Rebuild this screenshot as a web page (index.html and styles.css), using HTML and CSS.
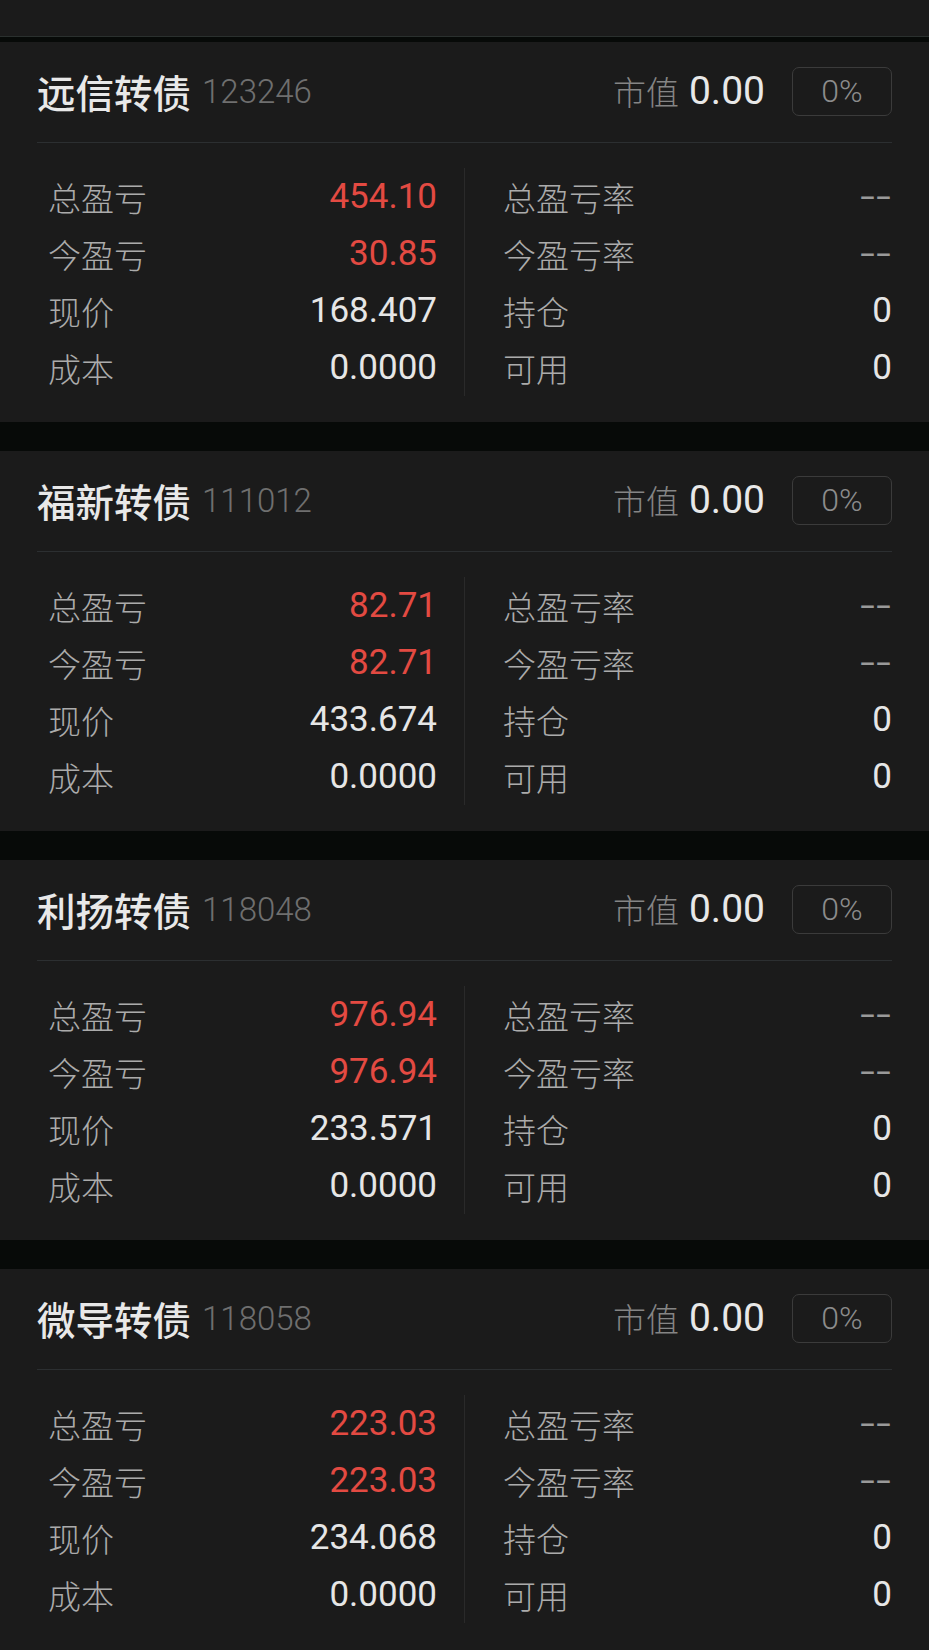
FILE: index.html
```html
<!DOCTYPE html>
<html lang="zh-CN">
<head>
    <meta charset="UTF-8">
    <title>持仓</title>
    <link rel="stylesheet" href="styles.css">
</head>
<body>
<div class="topbar"></div>

<div class="list">
    <div class="card">
        <div class="head">
            <span class="name">远信转债</span>
            <span class="code">123246</span>
            <span class="mv-label">市值</span>
            <span class="mv">0.00</span>
            <span class="ratio">0%</span>
        </div>
        <div class="data">
            <ul class="col col-left">
                <li><span class="k">总盈亏</span><span class="v red">454.10</span></li>
                <li><span class="k">今盈亏</span><span class="v red">30.85</span></li>
                <li><span class="k">现价</span><span class="v">168.407</span></li>
                <li><span class="k">成本</span><span class="v">0.0000</span></li>
            </ul>
            <ul class="col col-right">
                <li><span class="k">总盈亏率</span><span class="v dash">--</span></li>
                <li><span class="k">今盈亏率</span><span class="v dash">--</span></li>
                <li><span class="k">持仓</span><span class="v">0</span></li>
                <li><span class="k">可用</span><span class="v">0</span></li>
            </ul>
        </div>
    </div>

    <div class="card">
        <div class="head">
            <span class="name">福新转债</span>
            <span class="code">111012</span>
            <span class="mv-label">市值</span>
            <span class="mv">0.00</span>
            <span class="ratio">0%</span>
        </div>
        <div class="data">
            <ul class="col col-left">
                <li><span class="k">总盈亏</span><span class="v red">82.71</span></li>
                <li><span class="k">今盈亏</span><span class="v red">82.71</span></li>
                <li><span class="k">现价</span><span class="v">433.674</span></li>
                <li><span class="k">成本</span><span class="v">0.0000</span></li>
            </ul>
            <ul class="col col-right">
                <li><span class="k">总盈亏率</span><span class="v dash">--</span></li>
                <li><span class="k">今盈亏率</span><span class="v dash">--</span></li>
                <li><span class="k">持仓</span><span class="v">0</span></li>
                <li><span class="k">可用</span><span class="v">0</span></li>
            </ul>
        </div>
    </div>

    <div class="card">
        <div class="head">
            <span class="name">利扬转债</span>
            <span class="code">118048</span>
            <span class="mv-label">市值</span>
            <span class="mv">0.00</span>
            <span class="ratio">0%</span>
        </div>
        <div class="data">
            <ul class="col col-left">
                <li><span class="k">总盈亏</span><span class="v red">976.94</span></li>
                <li><span class="k">今盈亏</span><span class="v red">976.94</span></li>
                <li><span class="k">现价</span><span class="v">233.571</span></li>
                <li><span class="k">成本</span><span class="v">0.0000</span></li>
            </ul>
            <ul class="col col-right">
                <li><span class="k">总盈亏率</span><span class="v dash">--</span></li>
                <li><span class="k">今盈亏率</span><span class="v dash">--</span></li>
                <li><span class="k">持仓</span><span class="v">0</span></li>
                <li><span class="k">可用</span><span class="v">0</span></li>
            </ul>
        </div>
    </div>

    <div class="card">
        <div class="head">
            <span class="name">微导转债</span>
            <span class="code">118058</span>
            <span class="mv-label">市值</span>
            <span class="mv">0.00</span>
            <span class="ratio">0%</span>
        </div>
        <div class="data">
            <ul class="col col-left">
                <li><span class="k">总盈亏</span><span class="v red">223.03</span></li>
                <li><span class="k">今盈亏</span><span class="v red">223.03</span></li>
                <li><span class="k">现价</span><span class="v">234.068</span></li>
                <li><span class="k">成本</span><span class="v">0.0000</span></li>
            </ul>
            <ul class="col col-right">
                <li><span class="k">总盈亏率</span><span class="v dash">--</span></li>
                <li><span class="k">今盈亏率</span><span class="v dash">--</span></li>
                <li><span class="k">持仓</span><span class="v">0</span></li>
                <li><span class="k">可用</span><span class="v">0</span></li>
            </ul>
        </div>
    </div>
</div>
</body>
</html>
```

FILE: styles.css
```css
*{margin:0;padding:0;list-style:none;box-sizing:border-box;}

body{
    background:#070a08;
    font-family:Roboto,"Noto Sans CJK SC",sans-serif;
    color:#e6e6e6;
}

.topbar{height:37px;background:#1b1b1b;border-bottom:1px solid #2a302e;}

.list{display:flex;flex-direction:column;gap:29px;padding-top:5px;}

.card{background:#1b1b1b;padding:0 37px 26px;}
.card:last-child{padding-bottom:60px;}

/* 标题行 */
.head{
    height:101px;
    display:flex;
    align-items:center;
    border-bottom:1px solid #2c2f31;
    padding-bottom:2px;
}
.name{font-family:"Noto Sans CJK SC",sans-serif;font-size:38.5px;font-weight:500;color:#e8e8e8;}
.code{font-size:33px;font-weight:300;color:#6f6f6f;margin-left:11px;}
.mv-label{font-family:"Noto Sans CJK SC",sans-serif;font-size:33px;font-weight:300;color:#858585;margin-left:auto;}
.mv{font-size:39px;color:#e8e8e8;margin-left:10px;}
.ratio{
    width:100px;height:49px;margin-left:27px;
    border:1.5px solid #3b3b3b;border-radius:7px;
    display:flex;align-items:center;justify-content:center;
    font-size:32px;font-weight:300;color:#8c8c8c;
}

/* 数据区 */
.data{display:flex;margin-top:25px;}
.col{flex:1;}
.col-left{padding:0 27px 0 11px;border-right:1px solid #2a2a2a;}
.col-right{padding-left:38px;}
.col li{height:57px;display:flex;align-items:center;justify-content:space-between;}
.k{font-family:"Noto Sans CJK SC",sans-serif;font-size:33px;font-weight:300;color:#ababab;}
.v{font-size:35px;color:#e6e6e6;}
.v.red{color:#e34a42;}
.v.dash{color:#9a9a9a;display:inline-block;transform:scaleX(1.5);transform-origin:right center;letter-spacing:1px;}
```
